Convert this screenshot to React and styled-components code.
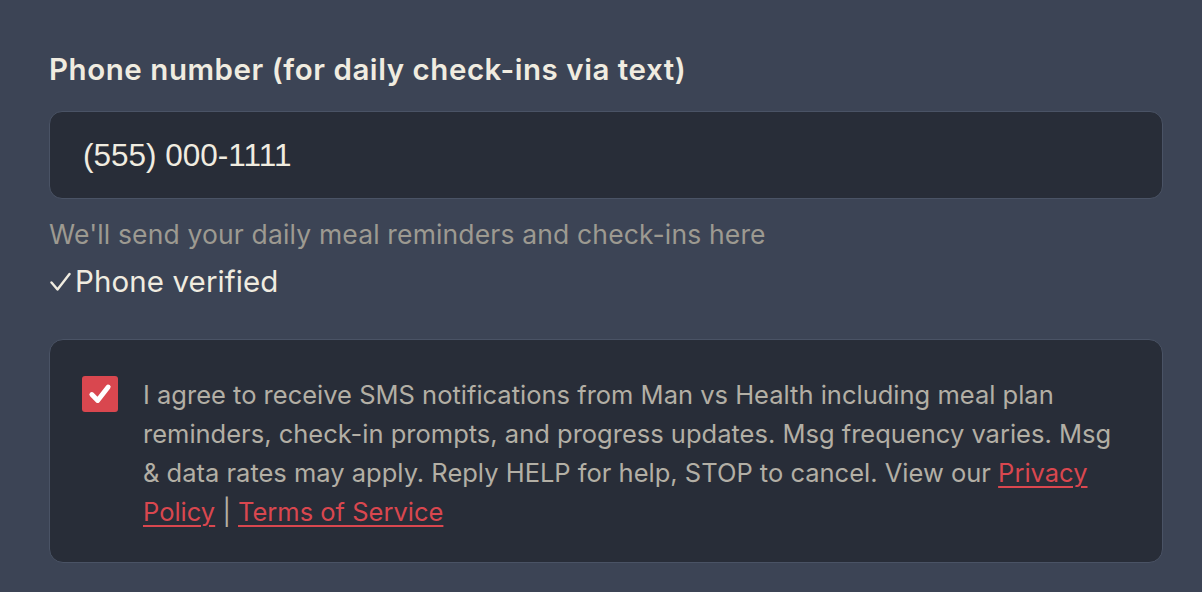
import React, { useState } from 'react';
import styled, { createGlobalStyle } from 'styled-components';

const GlobalStyle = createGlobalStyle`
  html, body {
    margin: 0;
    padding: 0;
    background: #3c4455;
  }
  body {
    font-family: Inter, "Noto Sans", sans-serif;
  }
`;

const Page = styled.div`
  box-sizing: border-box;
  width: 1202px;
  height: 592px;
  padding: 50px 39px 0 49px;
  background: #3c4455;
`;

const Label = styled.label`
  display: block;
  font-size: 29.5px;
  font-weight: 600;
  letter-spacing: 0.55px;
  color: #f0ece0;
  line-height: 38px;
  margin-bottom: 23px;
`;

const PhoneInput = styled.input`
  box-sizing: border-box;
  width: 100%;
  height: 88px;
  padding: 0 33px;
  background: #282d38;
  border: 1.5px solid #4a5365;
  border-radius: 13px;
  color: #f0ece0;
  font-family: "Liberation Sans", Arial, sans-serif;
  font-size: 31.5px;
  outline: none;
`;

const Hint = styled.div`
  margin-top: 19px;
  font-size: 26.5px;
  letter-spacing: 0.15px;
  line-height: 32px;
  color: #9d9a91;
`;

const Verified = styled.div`
  margin-top: 14px;
  height: 34px;
  display: flex;
  align-items: center;
  font-size: 29.5px;
  letter-spacing: 0.1px;
  line-height: 34px;
  color: #f0ece0;

  svg {
    flex: none;
    margin: 2px 4px 0 1px;
  }
`;

const ConsentBox = styled.div`
  box-sizing: border-box;
  margin-top: 41px;
  display: flex;
  align-items: flex-start;
  gap: 25px;
  padding: 35px 44px 31px 32px;
  background: #282d38;
  border: 1.5px solid #4a5365;
  border-radius: 14px;
`;

const Check = styled.button`
  flex: none;
  width: 36px;
  height: 36px;
  margin-top: 1px;
  padding: 0;
  display: flex;
  align-items: center;
  justify-content: center;
  background: ${p => (p.$on ? '#d9474f' : 'transparent')};
  border: ${p => (p.$on ? 'none' : '2px solid #8a8a8a')};
  border-radius: 3px;
  cursor: pointer;
`;

const ConsentText = styled.p`
  margin: 0;
  font-size: 25.5px;
  letter-spacing: 0;
  line-height: 39px;
  color: #b3afa5;
`;

const Link = styled.a`
  color: #d9474f;
  text-decoration: underline;
  text-underline-offset: 4px;
  text-decoration-thickness: 2px;
`;

export default function App() {
  const [agreed, setAgreed] = useState(true);

  return (
    <>
      <GlobalStyle />
      <Page>
        <Label htmlFor="phone">Phone number (for daily check-ins via text)</Label>
        <PhoneInput id="phone" type="tel" defaultValue="(555) 000-1111" />
        <Hint>We'll send your daily meal reminders and check-ins here</Hint>
        <Verified>
          <svg width="21" height="20" viewBox="0 0 21 20">
            <path d="M1.5 10.5 L7.5 17.5 L19.5 2" fill="none" stroke="#f0ece0" strokeWidth="2.4" strokeLinecap="round" strokeLinejoin="round" />
          </svg>
          Phone verified
        </Verified>
        <ConsentBox>
          <Check $on={agreed} onClick={() => setAgreed(!agreed)} aria-label="Agree">
            {agreed && (
              <svg width="28" height="28" viewBox="0 0 24 24">
                <path d="M5 12.5 L10 17.5 L19 6" fill="none" stroke="#fff" strokeWidth="4.2" strokeLinecap="round" strokeLinejoin="round" />
              </svg>
            )}
          </Check>
          <ConsentText>
            I agree to receive SMS notifications from Man vs Health including meal plan reminders,
            check-in prompts, and progress updates. Msg frequency varies. Msg &amp; data rates may
            apply. Reply HELP for help, STOP to cancel. View our <Link href="#">Privacy Policy</Link> |{' '}
            <Link href="#">Terms of Service</Link>
          </ConsentText>
        </ConsentBox>
      </Page>
    </>
  );
}
